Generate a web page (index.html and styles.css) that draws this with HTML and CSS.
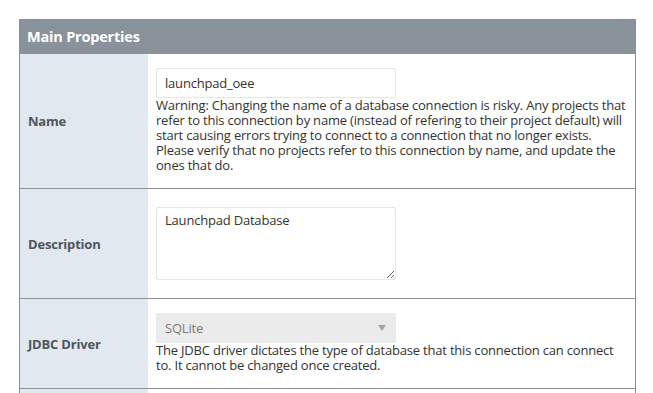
FILE: index.html
```html
<!DOCTYPE html>
<html>
<head>
<meta charset="utf-8">
<link rel="stylesheet" href="styles.css">
</head>
<body>
<div class="panel">
  <div class="panel-header">Main Properties</div>
  <div class="row">
    <div class="label">Name</div>
    <div class="field">
      <input class="text-input" type="text" value="launchpad_oee">
      <div class="help">Warning: Changing the name of a database connection is risky. Any projects that refer to this connection by name (instead of refering to their project default) will start causing errors trying to connect to a connection that no longer exists. Please verify that no projects refer to this connection by name, and update the ones that do.</div>
    </div>
  </div>
  <div class="row">
    <div class="label">Description</div>
    <div class="field">
      <textarea class="text-area">Launchpad Database</textarea>
    </div>
  </div>
  <div class="row">
    <div class="label">JDBC Driver</div>
    <div class="field">
      <div class="select"><span>SQLite</span><span class="arrow"></span></div>
      <div class="help">The JDBC driver dictates the type of database that this connection can connect to. It cannot be changed once created.</div>
    </div>
  </div>
  <div class="row last">
    <div class="label"></div>
    <div class="field"></div>
  </div>
</div>
</body>
</html>
```

FILE: styles.css
```css
html, body {
  margin: 0;
  padding: 0;
  background: #ffffff;
}
body {
  font-family: "Open Sans", "Liberation Sans", sans-serif;
  font-size: 13px;
  letter-spacing: -0.2px;
  color: #333333;
  padding: 19px 0 0 19px;
}
.panel {
  width: 617px;
  border-left: 1px solid #8b9197;
  border-right: 1px solid #8b9197;
  box-sizing: border-box;
}
.panel-header {
  background: #89929b;
  color: #ffffff;
  font-weight: 700;
  font-size: 14.5px;
  height: 35px;
  line-height: 35px;
  padding-left: 8px;
  margin-left: -1px;
  margin-right: -1px;
}
.row {
  display: flex;
  border-bottom: 1px solid #8b9197;
}
.label {
  width: 128px;
  flex: none;
  background: #e1e8ef;
  display: flex;
  align-items: center;
  padding-left: 8px;
  box-sizing: border-box;
  font-weight: 700;
  color: #50555b;
}
.field {
  flex: 1;
  padding: 14px 8px 15px 8px;
  line-height: 15px;
}
.text-input {
  display: block;
  width: 240px;
  height: 30px;
  box-sizing: border-box;
  border: 1px solid #e3e7eb;
  border-radius: 2px;
  padding: 0 8px;
  font-family: inherit;
  font-size: 13px;
  letter-spacing: -0.2px;
  color: #333333;
  margin: 0;
  outline: none;
}
.text-area {
  display: block;
  width: 240px;
  height: 73px;
  box-sizing: border-box;
  border: 1px solid #e3e7eb;
  border-radius: 2px;
  padding: 3px 8px;
  font-family: inherit;
  font-size: 13px;
  letter-spacing: -0.2px;
  line-height: 18px;
  color: #333333;
  margin: 4px 0 3px 0;
  outline: none;
}
.select {
  width: 240px;
  height: 30px;
  box-sizing: border-box;
  background: #ebebeb;
  border-radius: 2px;
  color: #7a7a7a;
  display: flex;
  align-items: center;
  justify-content: space-between;
  padding: 0 10px 0 9px;
}
.arrow {
  width: 0;
  height: 0;
  border-left: 4px solid transparent;
  border-right: 4px solid transparent;
  border-top: 6px solid #a3a3a3;
}
.help {
  color: #333333;
}
.row.last {
  border-bottom: none;
  height: 10px;
}
```
